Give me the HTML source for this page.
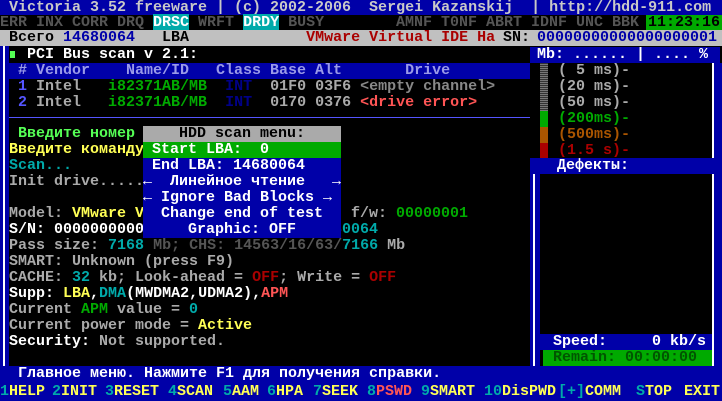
<!DOCTYPE html>
<html><head><meta charset="utf-8"><style>
*{margin:0;padding:0}
body{width:722px;height:401px;background:#000;position:relative;overflow:hidden;font-family:"Liberation Mono","DejaVu Sans Mono",monospace;font-size:15px;font-weight:bold}
.r{position:absolute;white-space:pre;height:16px;line-height:16px}
.b{position:absolute}
.w{color:#fff}.g{color:#aaa}.dg{color:#555}.y{color:#ffff55}.c{color:#00aaaa}.gr{color:#00aa00}.lg{color:#55ff55}.rd{color:#ff5555}.dr{color:#aa0000}.bl{color:#0000aa}.lb{color:#5555ff}.k{color:#000}.o{color:#aa5500}
.kb{position:absolute;top:383px;height:17px;line-height:17px;white-space:pre;color:#ffff55}
</style></head><body>
<div class="b" style="left:0;top:0;width:722px;height:15px;background:#0000a8"></div>
<div class="r g" style="left:0;top:0;height:15px;line-height:15px;color:#c8c8c8"> Victoria 3.52 freeware | (c) 2002-2006  Sergei Kazanskij  | http://hdd-911.com</div>
<div class="r dg" style="left:0;top:15px;height:15px;line-height:15px">ERR INX CORR DRQ <span style="background:#00aaaa;color:#fff">DRSC</span> WRFT <span style="background:#00aaaa;color:#fff">DRDY</span> BUSY</div>
<div class="r dg" style="left:396px;top:15px;height:15px;line-height:15px">AMNF T0NF ABRT IDNF UNC BBK</div>
<div class="b" style="left:646px;top:15px;width:76px;height:15px;background:#00aa00"></div>
<div class="r k" style="left:648px;top:15px;height:15px;line-height:15px">11:23:16</div>
<div class="b" style="left:0;top:30px;width:722px;height:16px;background:#c0c0c0"></div>
<div class="r k" style="left:0;top:30px"> Всего <span class="bl">14680064</span>   LBA             <span class="dr">VMware Virtual IDE Ha</span></div>
<div class="r k" style="left:503px;top:30px">SN:</div>
<div class="r bl" style="left:537px;top:30px">00000000000000000001</div>
<!-- left panel border -->
<div class="b" style="left:0;top:46px;width:9px;height:320px;background:#0000a8"></div>
<div class="b" style="left:3px;top:46px;width:2px;height:320px;background:#fff"></div>
<div class="b" style="left:10px;top:51px;width:5px;height:7px;background:#55ff55"></div>
<div class="r w" style="left:0;top:47px">   PCI Bus scan v 2.1:</div>
<div class="b" style="left:9px;top:63px;width:521px;height:16px;background:#0000a8"></div>
<div class="r" style="left:0;top:63px;color:#9a9ae8">  # Vendor    Name/ID   Class Base Alt       Drive</div>
<div class="r g" style="left:0;top:79px">  <span class="lb">1</span> Intel   <span class="gr">i82371AB/MB</span>  <span style="color:#000088">INT</span>  01F0 03F6 <span style="color:#888">&lt;empty channel&gt;</span></div>
<div class="r g" style="left:0;top:95px">  <span class="lb">2</span> Intel   <span class="gr">i82371AB/MB</span>  <span style="color:#000088">INT</span>  0170 0376 <span class="rd">&lt;drive error&gt;</span></div>
<div class="b" style="left:9px;top:117px;width:521px;height:1px;background:#5555ff"></div>
<div class="r lg" style="left:0;top:126px">  Введите номер</div>
<div class="r y" style="left:0;top:142px"> Введите команду</div>
<div class="r c" style="left:0;top:158px"> Scan...</div>
<div class="r g" style="left:0;top:174px"> Init drive.....</div>
<div class="r g" style="left:0;top:206px"> Model: <span class="y">VMware Virtual IDE Hard</span></div>
<div class="r g" style="left:351px;top:206px">f/w: <span class="gr">00000001</span></div>
<div class="r w" style="left:0;top:222px"> S/N: 00000000000000000001</div>
<div class="r c" style="left:306px;top:222px">14680064</div>
<div class="r g" style="left:0;top:238px"> Pass size: <span class="c">7168</span> <span class="dg">Mb; CHS: 14563/16/63/</span><span class="c">7166</span> Mb</div>
<div class="r g" style="left:0;top:254px"> SMART: Unknown (press F9)</div>
<div class="r g" style="left:0;top:270px"> CACHE: <span class="c">32</span> kb; Look-ahead = <span class="dr">OFF</span>; Write = <span class="dr">OFF</span></div>
<div class="r w" style="left:0;top:286px"> Supp: <span class="y">LBA</span>,<span class="c">DMA</span>(MWDMA2,UDMA2),<span class="rd">APM</span></div>
<div class="r g" style="left:0;top:302px"> Current <span class="gr">APM</span> value = <span class="c">0</span></div>
<div class="r g" style="left:0;top:318px"> Current power mode = <span class="y">Active</span></div>
<div class="r g" style="left:0;top:334px"> <span class="w">Security:</span> Not supported.</div>
<!-- menu -->
<div class="b" style="left:143px;top:126px;width:198px;height:112px;background:#0000a8"></div>
<div class="b" style="left:143px;top:126px;width:198px;height:16px;background:#aaa"></div>
<div class="b" style="left:143px;top:142px;width:198px;height:16px;background:#00aa00"></div>
<div class="r k" style="left:143px;top:126px;width:198px;text-align:center">HDD scan menu:</div>
<div class="r w" style="left:143px;top:142px"> Start LBA:  0</div>
<div class="r w" style="left:143px;top:158px"> End LBA: 14680064</div>
<div class="r w" style="left:143px;top:174px">←  Линейное чтение   →</div>
<div class="r w" style="left:143px;top:190px">← Ignore Bad Blocks →</div>
<div class="r w" style="left:143px;top:206px">  Change end of test</div>
<div class="r w" style="left:143px;top:222px">     Graphic: OFF</div>
<!-- right panel -->
<div class="b" style="left:530px;top:47px;width:190px;height:16px;background:#0000a8"></div>
<div class="r w" style="left:537px;top:47px">Mb: ...... | .... %</div>
<div class="b" style="left:712px;top:63px;width:2px;height:95px;background:#fff"></div>
<div class="b" style="left:714px;top:63px;width:8px;height:95px;background:#0000a8"></div>
<div class="b" style="left:540px;top:63px;width:8px;height:48px;background:repeating-linear-gradient(0deg,#777 0 1px,#333 1px 2px)"></div>
<div class="b" style="left:540px;top:111px;width:8px;height:16px;background:#00aa00"></div>
<div class="b" style="left:540px;top:127px;width:8px;height:16px;background:#aa5500"></div>
<div class="b" style="left:540px;top:143px;width:8px;height:15px;background:#aa0000"></div>
<div class="r g" style="left:558px;top:63px">( 5 ms)-</div>
<div class="r g" style="left:558px;top:79px">(20 ms)-</div>
<div class="r g" style="left:558px;top:95px">(50 ms)-</div>
<div class="r gr" style="left:558px;top:111px">(200ms)-</div>
<div class="r o" style="left:558px;top:127px">(500ms)-</div>
<div class="r dr" style="left:558px;top:143px">(1.5 s)-</div>
<div class="b" style="left:530px;top:158px;width:192px;height:16px;background:#0000a8"></div>
<div class="r w" style="left:557px;top:158px">Дефекты:</div>
<div class="b" style="left:530px;top:174px;width:3px;height:192px;background:#0000a8"></div>
<div class="b" style="left:533px;top:174px;width:2px;height:192px;background:#fff"></div>
<div class="b" style="left:535px;top:174px;width:5px;height:192px;background:#0000a8"></div>
<div class="b" style="left:712px;top:174px;width:2px;height:192px;background:#fff"></div>
<div class="b" style="left:714px;top:174px;width:8px;height:192px;background:#0000a8"></div>
<div class="b" style="left:540px;top:334px;width:172px;height:16px;background:#0000a8"></div>
<div class="r w" style="left:553px;top:334px">Speed:     0 kb/s</div>
<div class="b" style="left:543px;top:350px;width:169px;height:16px;background:#00aa00"></div>
<div class="r" style="left:553px;top:350px;color:#005500">Remain: 00:00:00</div>
<!-- bottom -->
<div class="b" style="left:0;top:366px;width:722px;height:35px;background:#0000a8"></div>
<div class="r w" style="left:0;top:366px">  Главное меню. Нажмите F1 для получения справки.</div>
<div class="kb" style="left:0"><span class="c">1</span>HELP</div>
<div class="kb" style="left:52px"><span class="c">2</span>INIT</div>
<div class="kb" style="left:105px"><span class="c">3</span>RESET</div>
<div class="kb" style="left:168px"><span class="c">4</span>SCAN</div>
<div class="kb" style="left:223px"><span class="c">5</span>AAM</div>
<div class="kb" style="left:267px"><span class="c">6</span>HPA</div>
<div class="kb" style="left:313px"><span class="c">7</span>SEEK</div>
<div class="kb" style="left:367px"><span class="c">8</span><span class="rd">PSWD</span></div>
<div class="kb" style="left:421px"><span class="c">9</span>SMART</div>
<div class="kb" style="left:484px"><span class="c">10</span>DisPWD</div>
<div class="kb" style="left:558px"><span class="c">[+]</span>COMM</div>
<div class="kb" style="left:636px"><span class="c">S</span>TOP</div>
<div class="kb" style="left:684px">EXIT</div>
</body></html>
